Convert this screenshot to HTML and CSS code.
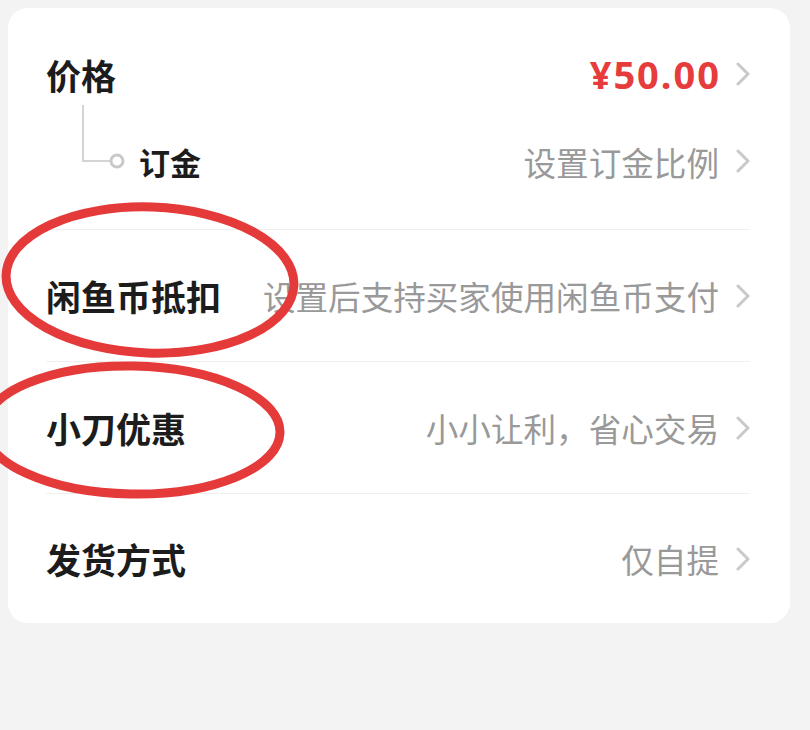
FILE: index.html
```html
<!DOCTYPE html>
<html>
<head>
    <meta charset="utf-8">
    <title>发布设置</title>
    <link rel="stylesheet" href="styles.css">
</head>
<body>
    <div class="card">
        <div class="group">
            <div class="line">
                <span class="label">价格</span>
                <span class="value price">¥50.00</span>
                <svg class="chevron" viewBox="0 0 14 24"><path d="M2 2 L12 12 L2 22" /></svg>
            </div>
            <div class="line sub">
                <svg class="connector" viewBox="0 0 80 64">
                    <path d="M37 0 V56 H64" />
                    <circle cx="71" cy="56" r="6" />
                </svg>
                <span class="label small">订金</span>
                <span class="value">设置订金比例</span>
                <svg class="chevron" viewBox="0 0 14 24"><path d="M2 2 L12 12 L2 22" /></svg>
            </div>
        </div>
        <div class="row">
            <span class="label">闲鱼币抵扣</span>
            <span class="value">设置后支持买家使用闲鱼币支付</span>
            <svg class="chevron" viewBox="0 0 14 24"><path d="M2 2 L12 12 L2 22" /></svg>
        </div>
        <div class="row">
            <span class="label">小刀优惠</span>
            <span class="value">小小让利，省心交易</span>
            <svg class="chevron" viewBox="0 0 14 24"><path d="M2 2 L12 12 L2 22" /></svg>
        </div>
        <div class="row last">
            <span class="label">发货方式</span>
            <span class="value">仅自提</span>
            <svg class="chevron" viewBox="0 0 14 24"><path d="M2 2 L12 12 L2 22" /></svg>
        </div>
    </div>

    <!-- red marks drawn over the screenshot -->
    <svg class="marks" viewBox="0 0 810 730">
        <ellipse cx="150" cy="280" rx="144" ry="73" transform="rotate(2 150 280)" />
        <ellipse cx="132" cy="430" rx="148" ry="64" transform="rotate(1 132 430)" />
    </svg>
</body>
</html>
```

FILE: styles.css
```css
body {
    margin: 0;
    padding: 8px;
    background-color: #f3f3f3;
    font-family: "Noto Sans CJK SC", "Noto Sans", sans-serif;
    height: 730px;
    box-sizing: border-box;
    position: relative;
    overflow: hidden;
}

.card {
    width: 782px;
    background-color: #fff;
    border-radius: 20px;
    padding: 0 40px 0 38px;
    box-sizing: border-box;
}

.group {
    padding: 36px 0 38px;
    border-bottom: 1px solid #efefef;
}

.line {
    display: flex;
    align-items: center;
    height: 60px;
}

.line.sub {
    margin-top: 27px;
}

.row {
    display: flex;
    align-items: center;
    height: 132px;
    box-sizing: border-box;
    border-bottom: 1px solid #efefef;
}

.row.last {
    height: 129px;
    border-bottom: none;
}

.label {
    font-size: 35px;
    font-weight: 700;
    color: #1c1c1c;
}

.label.small {
    font-size: 31px;
}

.value {
    margin-left: auto;
    font-size: 32.6px;
    color: #999;
}

.price {
    font-size: 38px;
    font-weight: 700;
    letter-spacing: 2px;
    margin-right: -2px;
    color: #e63c3c;
    font-family: "Noto Sans", sans-serif;
}

.chevron {
    width: 14px;
    height: 24px;
    margin-left: 17px;
    flex-shrink: 0;
}

.chevron path {
    fill: none;
    stroke: #c9c9c9;
    stroke-width: 3;
    stroke-linecap: round;
    stroke-linejoin: round;
}

.connector {
    width: 80px;
    height: 64px;
    align-self: flex-start;
    margin-top: -26px;
    margin-right: 13px;
    flex-shrink: 0;
}

.connector path {
    fill: none;
    stroke: #d4d4d4;
    stroke-width: 2;
}

.connector circle {
    fill: #fff;
    stroke: #c8c8c8;
    stroke-width: 3;
}

.marks {
    position: absolute;
    left: 0;
    top: 0;
    width: 810px;
    height: 730px;
}

.marks ellipse {
    fill: none;
    stroke: #e53a3a;
    stroke-width: 9;
}
```
